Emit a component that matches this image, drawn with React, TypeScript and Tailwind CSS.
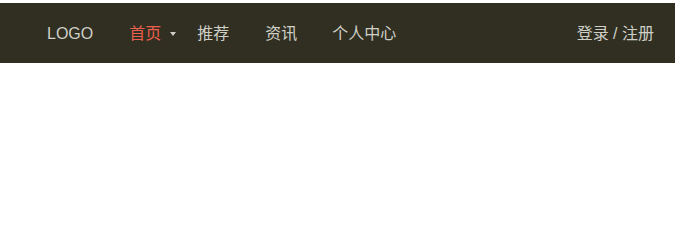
export default function App() {
  return (
    <div className="min-h-[252px] w-full bg-white pt-[3px] pr-[5px] font-['Liberation_Sans','Noto_Sans_CJK_SC',sans-serif]">
      <nav className="flex h-[60px] items-center bg-[#302f22] pl-[47px] pr-[21px] pt-[2px] text-[16px] text-[#cfcfc8]">
        <a className="mr-[36px] leading-none">LOGO</a>
        <ul className="flex items-center">
          <li className="flex items-center text-[#ea5f4e]">
            首页
            <span className="ml-[9px] mr-[21px] h-0 w-0 border-x-[3px] border-t-[4px] border-x-transparent border-t-[#cfcfc8]" />
          </li>
          <li className="mr-[36px]">推荐</li>
          <li className="mr-[35px]">资讯</li>
          <li>个人中心</li>
        </ul>
        <div className="ml-auto">登录 / 注册</div>
      </nav>
    </div>
  );
}
